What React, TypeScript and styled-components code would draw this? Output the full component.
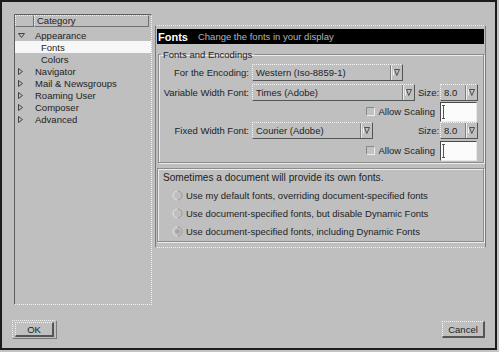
import React from "react";
import styled, { createGlobalStyle } from "styled-components";

const Global = createGlobalStyle`
  html, body { margin: 0; padding: 0; background: #c4c4c4; }
  body {
    font-family: "Liberation Sans", Arial, Helvetica, sans-serif;
    font-size: 9.5px;
    color: #1e1e1e;
  }
  #root { width: 499px; height: 352px; }
`;

const Window = styled.div`
  box-sizing: border-box;
  width: 497px;
  height: 350px;
  border: 2px solid #1c1c1c;
  background: #bfbfbf;
  display: flex;
  flex-direction: column;
  padding: 12px 8px 9px 10px;
`;

const Main = styled.div`
  display: flex;
  gap: 3px;
  height: 291px;
  margin-left: 2px;
`;

const Tree = styled.div`
  box-sizing: border-box;
  width: 138px;
  height: 100%;
  border-top: 1px solid #5e5e5e;
  border-left: 1px solid #5e5e5e;
  border-right: 1px dotted #f4f4f4;
  border-bottom: 1px dotted #f4f4f4;
  display: flex;
  flex-direction: column;
`;

const TreeHeader = styled.div`
  display: flex;
  height: 12px;
  margin-right: 2px;
`;

const HeaderCell = styled.div<{ $w?: number }>`
  box-sizing: border-box;
  ${(p) => (p.$w ? `width: ${p.$w}px;` : "flex: 1;")}
  height: 100%;
  border-top: 1px dotted #f4f4f4;
  border-left: 1px dotted #f4f4f4;
  border-right: 1px solid #707070;
  border-bottom: 1px solid #707070;
  padding-left: 2px;
  display: flex;
  align-items: center;
  line-height: 1;
`;

const TreeList = styled.div`
  padding-top: 2px;
  display: flex;
  flex-direction: column;
`;

const TreeRow = styled.div<{ $level: number; $selected?: boolean }>`
  height: 12px;
  display: flex;
  align-items: center;
  padding-left: ${(p) => (p.$level === 0 ? 3 : 26)}px;
  background: ${(p) => (p.$selected ? "#f7f7f7" : "transparent")};
  white-space: nowrap;
`;

const Expander = styled.span`
  width: 17px;
  display: flex;
  align-items: center;
`;

const Panel = styled.div`
  box-sizing: border-box;
  width: 331px;
  height: 223px;
  margin-top: 11px;
  border-top: 1px dotted #f0f0f0;
  border-left: 1px solid #7a7a7a;
  border-right: 1px solid #7a7a7a;
  border-bottom: 1px dotted #f0f0f0;
  padding: 3px 1px 0 1px;
  display: flex;
  flex-direction: column;
`;

const TitleBar = styled.div`
  height: 15px;
  background: #000;
  display: flex;
  align-items: center;
  padding-left: 1px;
  white-space: nowrap;
`;

const TitleMain = styled.span`
  color: #fff;
  font-weight: bold;
  font-size: 11px;
`;

const TitleSub = styled.span`
  color: #b4b4b4;
  margin-left: 10px;
`;

const Group = styled.fieldset`
  margin: 5px 0 0 1px;
  padding: 2px 0 1px 0;
  border: 1px solid #8c8c8c;
  box-shadow: inset 1px 1px 0 #ececec, 1px 1px 0 #ececec;
  min-width: 0;
`;

const Legend = styled.legend`
  padding: 0 2px;
  margin-left: 2px;
  line-height: 11px;
`;

const FormGrid = styled.div`
  display: grid;
  grid-template-columns: 90px 163px 19px 38px;
  grid-template-rows: 20px 20px 19px 19px 21px;
  column-gap: 3px;
  align-items: center;
`;

const FieldLabel = styled.span`
  text-align: right;
  white-space: nowrap;
`;

const SizeLabel = styled.span`
  white-space: nowrap;
`;

const Select = styled.div<{ $w: number }>`
  box-sizing: border-box;
  width: ${(p) => p.$w}px;
  height: 17px;
  display: flex;
  background: #c0c0c0;
  border-top: 1px dotted #f6f6f6;
  border-left: 1px dotted #f6f6f6;
  border-right: 1px solid #555;
  border-bottom: 1px solid #555;
`;

const SelectText = styled.span`
  flex: 1;
  padding-left: 3px;
  display: flex;
  align-items: center;
  white-space: nowrap;
  overflow: hidden;
`;

const SelectArrow = styled.span`
  width: 11px;
  border-left: 1px solid #808080;
  box-shadow: inset 1px 0 0 #ececec;
  display: flex;
  align-items: center;
  justify-content: center;
`;

const ScaleRow = styled.label`
  grid-column: 2 / 4;
  display: flex;
  justify-content: flex-end;
  align-items: center;
  gap: 4px;
  padding-right: 2px;
  white-space: nowrap;
`;

const Check = styled.span`
  box-sizing: border-box;
  width: 9px;
  height: 9px;
  border-top: 1px solid #8a8a8a;
  border-left: 1px solid #8a8a8a;
  border-right: 1px solid #ececec;
  border-bottom: 1px solid #ececec;
  background: #c2c2c2;
`;

const TextBox = styled.div`
  box-sizing: border-box;
  width: 37px;
  height: 20px;
  background: #fbfbfb;
  border-top: 1px solid #4a4a4a;
  border-left: 1px solid #4a4a4a;
  border-right: 1px solid #e8e8e8;
  border-bottom: 1px solid #e8e8e8;
  display: flex;
  align-items: center;
  padding-left: 1px;
`;

const Box = styled.div`
  margin: 5px 0 0 0;
  border: 1px solid #8c8c8c;
  box-shadow: inset 1px 1px 0 #ececec, 1px 1px 0 #ececec;
  padding: 3px 0 1px 5px;
  display: flex;
  flex-direction: column;
`;

const Note = styled.div`
  height: 12px;
  line-height: 12px;
  margin-bottom: 2px;
  font-size: 10.1px;
`;

const RadioRow = styled.div`
  height: 18px;
  display: flex;
  align-items: center;
  padding-left: 9px;
  gap: 3px;
  white-space: nowrap;
`;

const Footer = styled.div`
  margin-top: 15px;
  display: flex;
  justify-content: space-between;
  align-items: flex-start;
  margin-right: 2px;
`;

const DefaultRing = styled.div`
  box-sizing: border-box;
  width: 45px;
  height: 19px;
  border-top: 1px dotted #f2f2f2;
  border-left: 1px dotted #f2f2f2;
  border-right: 1px solid #7a7a7a;
  border-bottom: 1px solid #7a7a7a;
  padding: 1px 2px 1px 2px;
  display: flex;
`;

const Button = styled.div<{ $w?: number }>`
  box-sizing: border-box;
  ${(p) => (p.$w ? `width: ${p.$w}px; height: 17px;` : "flex: 1;")}
  border-top: 1px dotted #f6f6f6;
  border-left: 1px dotted #f6f6f6;
  border-right: 2px solid #555;
  border-bottom: 2px solid #555;
  background: #c0c0c0;
  display: flex;
  align-items: center;
  justify-content: center;
  color: #222;
`;

const CancelWrap = styled.div`
  margin-top: 1px;
`;

const DownTri = () => (
  <svg width="7" height="5" viewBox="0 0 7 5">
    <polygon points="0.5,0.5 6.5,0.5 3.5,4.5" fill="none" stroke="#333" strokeWidth="0.9" />
  </svg>
);

const RightTri = () => (
  <svg width="5" height="7" viewBox="0 0 5 7">
    <polygon points="0.5,0.5 4.5,3.5 0.5,6.5" fill="none" stroke="#333" strokeWidth="0.9" />
  </svg>
);

const ArrowIcon = () => (
  <svg width="7" height="7" viewBox="0 0 7 7">
    <line x1="0.5" y1="0.5" x2="0.5" y2="6.5" stroke="#f0f0f0" />
    <polyline points="1.5,0.5 6.5,0.5 3.8,6.5 1.5,0.5" fill="none" stroke="#444" strokeWidth="0.9" />
  </svg>
);

const IBeam = () => (
  <svg width="4" height="14" viewBox="0 0 4 14">
    <path d="M0 0.5 H3 M1.5 0.5 V13.5 M0 13.5 H3" stroke="#555" strokeWidth="1" fill="none" />
  </svg>
);

const Radio: React.FC<{ on?: boolean }> = ({ on }) => (
  <svg width="11" height="11" viewBox="0 0 11 11">
    <path d="M5.5 1 A4.5 4.5 0 0 0 5.5 10" stroke="#e4e4e4" fill="none" strokeWidth="1" />
    <path d="M5.5 1 A4.5 4.5 0 0 1 5.5 10" stroke="#9a9a9a" fill="none" strokeWidth="1" />
    {on && <circle cx="5.5" cy="5.5" r="2.3" fill="#a4a4a4" />}
  </svg>
);

const Drop: React.FC<{ w: number; value: string }> = ({ w, value }) => (
  <Select $w={w}>
    <SelectText>{value}</SelectText>
    <SelectArrow>
      <ArrowIcon />
    </SelectArrow>
  </Select>
);

const treeItems: { label: string; level: number; open?: boolean; leaf?: boolean; selected?: boolean }[] = [
  { label: "Appearance", level: 0, open: true },
  { label: "Fonts", level: 1, leaf: true, selected: true },
  { label: "Colors", level: 1, leaf: true },
  { label: "Navigator", level: 0 },
  { label: "Mail & Newsgroups", level: 0 },
  { label: "Roaming User", level: 0 },
  { label: "Composer", level: 0 },
  { label: "Advanced", level: 0 },
];

export default function App() {
  return (
    <>
      <Global />
      <Window>
        <Main>
          <Tree>
            <TreeHeader>
              <HeaderCell $w={19} />
              <HeaderCell>Category</HeaderCell>
            </TreeHeader>
            <TreeList>
              {treeItems.map((it) => (
                <TreeRow key={it.label} $level={it.level} $selected={it.selected}>
                  {!it.leaf && <Expander>{it.open ? <DownTri /> : <RightTri />}</Expander>}
                  {it.label}
                </TreeRow>
              ))}
            </TreeList>
          </Tree>
          <Panel>
            <TitleBar>
              <TitleMain>Fonts</TitleMain>
              <TitleSub>Change the fonts in your display</TitleSub>
            </TitleBar>
            <Group>
              <Legend>Fonts and Encodings</Legend>
              <FormGrid>
                <FieldLabel>For the Encoding:</FieldLabel>
                <Drop w={151} value="Western (Iso-8859-1)" />
                <span />
                <span />

                <FieldLabel>Variable Width Font:</FieldLabel>
                <Drop w={163} value="Times (Adobe)" />
                <SizeLabel>Size:</SizeLabel>
                <Drop w={38} value="8.0" />

                <span />
                <ScaleRow>
                  <Check />
                  Allow Scaling
                </ScaleRow>
                <TextBox>
                  <IBeam />
                </TextBox>

                <FieldLabel>Fixed Width Font:</FieldLabel>
                <Drop w={121} value="Courier (Adobe)" />
                <SizeLabel>Size:</SizeLabel>
                <Drop w={38} value="8.0" />

                <span />
                <ScaleRow>
                  <Check />
                  Allow Scaling
                </ScaleRow>
                <TextBox>
                  <IBeam />
                </TextBox>
              </FormGrid>
            </Group>
            <Box>
              <Note>Sometimes a document will provide its own fonts.</Note>
              <RadioRow>
                <Radio />
                Use my default fonts, overriding document-specified fonts
              </RadioRow>
              <RadioRow>
                <Radio />
                Use document-specified fonts, but disable Dynamic Fonts
              </RadioRow>
              <RadioRow>
                <Radio on />
                Use document-specified fonts, including Dynamic Fonts
              </RadioRow>
            </Box>
          </Panel>
        </Main>
        <Footer>
          <DefaultRing>
            <Button>OK</Button>
          </DefaultRing>
          <CancelWrap>
            <Button $w={43}>Cancel</Button>
          </CancelWrap>
        </Footer>
      </Window>
    </>
  );
}
